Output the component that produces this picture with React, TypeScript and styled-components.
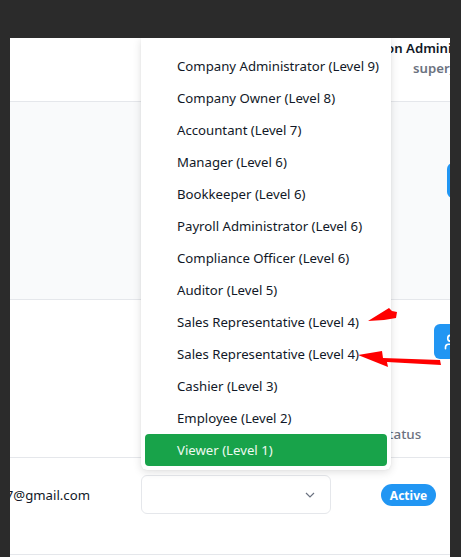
import React from "react";
import styled, { createGlobalStyle } from "styled-components";
import { UserPlus } from "lucide-react";

const Global = createGlobalStyle`
  html, body { margin: 0; padding: 0; background: #2b2b2b; }
  body { font-family: "Noto Sans", "Open Sans", sans-serif; -webkit-font-smoothing: antialiased; }
  * { box-sizing: border-box; }
`;

const Viewport = styled.div`
  width: 461px;
  height: 557px;
  padding: 38px 11px 0 10px;
  position: relative;
  overflow: hidden;
`;

const Frame = styled.div`
  position: relative;
  width: 440px;
  height: 519px;
  background: #ffffff;
  overflow: hidden;
`;

const Page = styled.div`
  width: 660px;
  margin-left: -100px;
`;

const Header = styled.header`
  height: 64px;
  display: flex;
  justify-content: flex-end;
  align-items: flex-start;
  padding-right: 74px;
  border-bottom: 1px solid #e5e7eb;
  background: #fff;
`;

const UserBlock = styled.div`
  display: flex;
  flex-direction: column;
  align-items: flex-end;
`;

const UserName = styled.div`
  font-size: 13.2px;
  line-height: 20px;
  font-weight: 600;
  color: #111827;
  white-space: nowrap;
`;

const UserHandle = styled.div`
  font-size: 13.2px;
  line-height: 20px;
  font-weight: 600;
  color: #6b7280;
`;

const GraySection = styled.section`
  height: 198px;
  background: #f9fafb;
  border-bottom: 1px solid #e5e7eb;
  display: flex;
  justify-content: flex-end;
  align-items: flex-start;
  padding: 61px 24px 0 0;
`;

const PrimaryButton = styled.button<{ $w: number }>`
  width: ${(p) => p.$w}px;
  height: 35px;
  border: none;
  border-radius: 6px;
  background: #2196f3;
  color: #fff;
  display: flex;
  align-items: center;
  gap: 6px;
  padding: 0 10px;
  font-family: inherit;
  font-size: 13.2px;
  font-weight: 600;
`;

const WhiteSection = styled.section`
  padding-top: 24px;
`;

const Toolbar = styled.div`
  display: flex;
  justify-content: flex-end;
  padding-right: 24px;
  margin-bottom: 51px;
`;

const TableRow = styled.div<{ $head?: boolean }>`
  display: grid;
  grid-template-columns: 231px 240px 1fr;
  align-items: center;
  border-bottom: 1px solid #e5e7eb;
  ${(p) => (p.$head ? "height: 48px;" : "padding: 17px 0 40px;")}
`;

const HeadCell = styled.div`
  font-size: 13.4px;
  font-weight: 500;
  color: #6b7280;
  padding-left: 24px;
  &:last-child { padding-left: 0; }
`;

const EmailCell = styled.div`
  font-size: 13.2px;
  color: #111827;
  text-align: right;
  padding-right: 51px;
  white-space: nowrap;
`;

const SelectBox = styled.div`
  width: 190px;
  height: 39px;
  border: 1px solid #e5e7eb;
  border-radius: 6px;
  display: flex;
  align-items: center;
  justify-content: flex-end;
  padding-right: 15px;
  background: #fff;
`;

const Badge = styled.span`
  display: inline-flex;
  align-items: center;
  justify-content: center;
  width: 55px;
  height: 22px;
  border-radius: 11px;
  background: #2196f3;
  color: #fff;
  font-size: 12px;
  font-weight: 700;
`;

const Menu = styled.ul`
  position: absolute;
  top: 0;
  left: 131px;
  width: 250px;
  margin: 0;
  padding: 12px 4px 4px;
  list-style: none;
  background: #fff;
  border-radius: 0 0 6px 6px;
  box-shadow: 0 2px 8px rgba(0, 0, 0, 0.13), 0 0 1px rgba(0, 0, 0, 0.12);
`;

const MenuItem = styled.li<{ $selected?: boolean }>`
  height: 32px;
  display: flex;
  align-items: center;
  padding-left: 32px;
  border-radius: 4px;
  font-size: 13.2px;
  white-space: nowrap;
  color: ${(p) => (p.$selected ? "#eefaf1" : "#111827")};
  background: ${(p) => (p.$selected ? "#18a34a" : "transparent")};
`;

const Annotations = styled.svg`
  position: absolute;
  top: 0;
  left: 0;
  pointer-events: none;
`;

const roles = [
  "Company Administrator (Level 9)",
  "Company Owner (Level 8)",
  "Accountant (Level 7)",
  "Manager (Level 6)",
  "Bookkeeper (Level 6)",
  "Payroll Administrator (Level 6)",
  "Compliance Officer (Level 6)",
  "Auditor (Level 5)",
  "Sales Representative (Level 4)",
  "Sales Representative (Level 4)",
  "Cashier (Level 3)",
  "Employee (Level 2)",
  "Viewer (Level 1)",
];

export default function App() {
  return (
    <>
      <Global />
      <Viewport>
        <Frame>
          <Page>
            <Header>
              <UserBlock>
                <UserName>Application Administrator</UserName>
                <UserHandle>super_admin</UserHandle>
              </UserBlock>
            </Header>
            <GraySection>
              <PrimaryButton $w={99}>Add</PrimaryButton>
            </GraySection>
            <WhiteSection>
              <Toolbar>
                <PrimaryButton $w={112}>
                  <UserPlus size={18} strokeWidth={2.2} />
                  Add User
                </PrimaryButton>
              </Toolbar>
              <TableRow $head>
                <HeadCell>Email</HeadCell>
                <HeadCell>Role</HeadCell>
                <HeadCell>Status</HeadCell>
              </TableRow>
              <TableRow>
                <EmailCell>michael.r2017@gmail.com</EmailCell>
                <div>
                  <SelectBox>
                    <svg width="10" height="6" viewBox="0 0 10 6">
                      <path d="M1 1l4 4 4-4" fill="none" stroke="#6b7280" strokeWidth="1.2" />
                    </svg>
                  </SelectBox>
                </div>
                <div>
                  <Badge>Active</Badge>
                </div>
              </TableRow>
            </WhiteSection>
          </Page>
          <Menu>
            {roles.map((r, i) => (
              <MenuItem key={i} $selected={i === roles.length - 1}>
                {r}
              </MenuItem>
            ))}
          </Menu>
        </Frame>
        <Annotations width="461" height="557" viewBox="0 0 461 557">
          <polygon points="368,321 389,308 392,311 397,312 396,318 384,320" fill="#ff0000" />
          <polygon points="358,355 382,351 383,358 440,360 441,365 387,362 388,367" fill="#ff0000" />
        </Annotations>
      </Viewport>
    </>
  );
}
